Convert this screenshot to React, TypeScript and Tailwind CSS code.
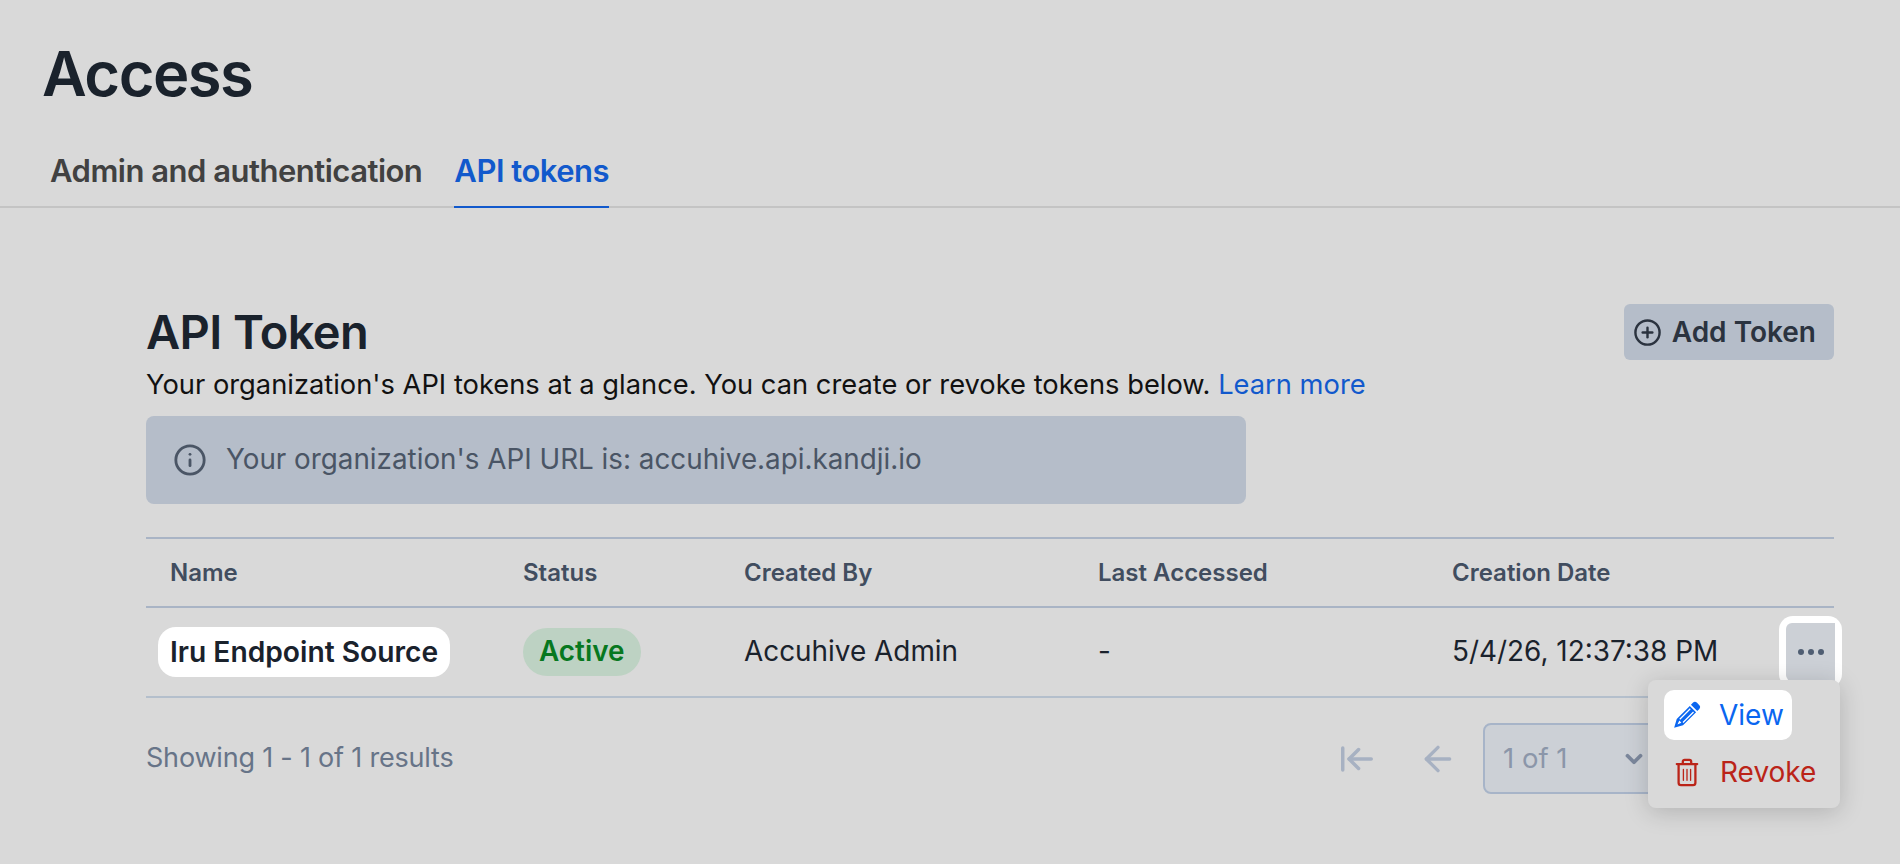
import React from 'react';
import { ArrowLeft, ArrowLeftToLine, ArrowRight, ArrowRightToLine, ChevronDown, CirclePlus, Info } from 'lucide-react';

const columns = 'grid grid-cols-[353px_221px_354px_354px_1fr] pl-[24px]';

const PencilIcon = () => (
  <svg width="28" height="28" viewBox="0 0 24 24" fill="#0a66f0">
    <path d="M17 1.6a2.6 2.6 0 0 1 3.6 0l1.8 1.8a2.6 2.6 0 0 1 0 3.6l-1.6 1.6-5.4-5.4L17 1.6zM14.4 4.2l5.4 5.4L8.6 20.8 1 23l2.2-7.6L14.4 4.2z" />
    <path d="M5.8 15.6l9-9M8.6 18.4l9-9" stroke="#fff" strokeWidth="1.1" />
    <path d="M3.8 20.2l1.6-3.4 1.8 1.8z" fill="#fff" />
  </svg>
);

const TrashIcon = () => (
  <svg width="24" height="29" viewBox="0 0 20 24" fill="none" stroke="#bb2418" strokeWidth="1.9" strokeLinecap="round" strokeLinejoin="round">
    <path d="M1.5 5h17M6.5 5V3a1.5 1.5 0 0 1 1.5-1.5h4A1.5 1.5 0 0 1 13.5 3v2M3 5v15.5a2 2 0 0 0 2 2h10a2 2 0 0 0 2-2V5" />
    <path d="M7 9.5v9M10 9.5v9M13 9.5v9" strokeWidth="1.1" />
  </svg>
);

export default function App() {
  return (
    <div className="h-[864px] w-full overflow-hidden bg-[#d9d9d9] font-['Inter',sans-serif] text-[#1a222c]">
      <div className="px-[42px] pt-[41px]">
        <h1 className="text-[61.5px] font-semibold leading-[66px] tracking-[-1.5px]">Access</h1>
      </div>

      <div className="mt-[29px] flex h-[72px] gap-[32px] border-b-2 border-[#c4c4c4] px-[50px]">
        <div className="pt-[17px] text-[31px] font-semibold leading-[36px] tracking-[-0.5px] text-[#414141]">
          Admin and authentication
        </div>
        <div className="h-[72px] border-b-2 border-[#1259cc] pt-[17px] text-[31px] font-semibold leading-[36px] tracking-[-0.5px] text-[#1259cc]">
          API tokens
        </div>
      </div>

      <div className="relative pl-[146px] pr-[66px] pt-[96px]">
        <div className="flex items-start justify-between">
          <h2 className="text-[47px] font-semibold leading-[56px] tracking-[-0.6px]">API Token</h2>
          <button className="flex h-[56px] items-center gap-[10px] rounded-[6px] bg-[#b5bdc9] pl-[9px] pr-[18px] text-[28px] font-semibold text-[#2b333f]">
            <CirclePlus size={29} strokeWidth={2} />
            <span>Add Token</span>
          </button>
        </div>

        <p className="mt-[9px] text-[27.3px] leading-[32px] text-[#111]">
          Your organization's API tokens at a glance. You can create or revoke tokens below.{' '}
          <a className="text-[#1259cc]">Learn more</a>
        </p>

        <div className="mt-[15px] flex h-[88px] w-[1100px] items-center gap-[19px] rounded-[8px] bg-[#b5bdc9] pl-[27px] text-[27.8px] text-[#4a5565]">
          <Info size={34} strokeWidth={2} />
          <span>Your organization's API URL is: accuhive.api.kandji.io</span>
        </div>

        <div className="mt-[33px] border-t-2 border-[#a9b4c5]">
          <div className={`${columns} h-[69px] items-center border-b-2 border-[#a9b4c5] text-[24px] font-semibold text-[#414d5f]`}>
            <div>Name</div>
            <div>Status</div>
            <div>Created By</div>
            <div>Last Accessed</div>
            <div>Creation Date</div>
          </div>
          <div className={`${columns} h-[90px] items-center border-b-2 border-[#b4bfcc] text-[27.9px]`}>
            <div>
              <span className="-ml-[12px] inline-flex h-[50px] items-center rounded-[18px] bg-white px-[12px] text-[28.2px] font-semibold">
                Iru Endpoint Source
              </span>
            </div>
            <div>
              <span className="inline-flex h-[48px] items-center rounded-full bg-[#bdd2c3] px-[16px] font-semibold text-[#07781f]">
                Active
              </span>
            </div>
            <div>Accuhive Admin</div>
            <div>-</div>
            <div className="flex items-center justify-between">
              <span>5/4/26, 12:37:38 PM</span>
              <span className="mr-[-8px] flex h-[72px] w-[63px] rounded-[14px] bg-white p-[7px]">
                <span className="flex flex-1 items-center justify-center rounded-l-[6px] bg-[#ccd0d6] text-[#4f5d72]">
                  <span className="flex gap-[4px]">
                    <i className="size-[6px] rounded-full bg-current" />
                    <i className="size-[6px] rounded-full bg-current" />
                    <i className="size-[6px] rounded-full bg-current" />
                  </span>
                </span>
              </span>
            </div>
          </div>
        </div>

        <div className="mt-[25px] flex h-[71px] items-center justify-between">
          <span className="text-[27px] tracking-[-0.2px] text-[#677488]">Showing 1 - 1 of 1 results</span>
          <div className="flex items-center pr-[28px] text-[#a7b1c2]">
            <ArrowLeftToLine size={38} strokeWidth={2.2} />
            <ArrowLeft size={40} strokeWidth={2} className="ml-[42px]" />
            <div className="ml-[25px] flex h-[71px] w-[178px] items-center justify-between rounded-[8px] border-2 border-[#a7b4c8] bg-[#ccd0d6] pl-[18px] pr-[12px] text-[27.5px] text-[#8b96a9]">
              <span>1 of 1</span>
              <ChevronDown size={26} strokeWidth={3.5} className="text-[#7b879c]" />
            </div>
            <ArrowRight size={40} strokeWidth={2} className="ml-[25px]" />
            <ArrowRightToLine size={38} strokeWidth={2.2} className="ml-[42px]" />
          </div>
        </div>

        <div className="absolute right-[60px] top-[472px] flex h-[128px] w-[192px] flex-col rounded-[8px] bg-[#d9d9d9] px-[16px] pt-[10px] text-[28px] shadow-[0_4px_24px_rgba(0,0,0,0.18)]">
          <div className="flex h-[50px] w-[128px] items-center gap-[18px] rounded-[10px] bg-white pl-[9px] text-[#0a66f0]">
            <PencilIcon />
            <span>View</span>
          </div>
          <div className="mt-[7px] flex h-[50px] items-center gap-[21px] pl-[11px] text-[#bb2418]">
            <TrashIcon />
            <span>Revoke</span>
          </div>
        </div>
      </div>
    </div>
  );
}
